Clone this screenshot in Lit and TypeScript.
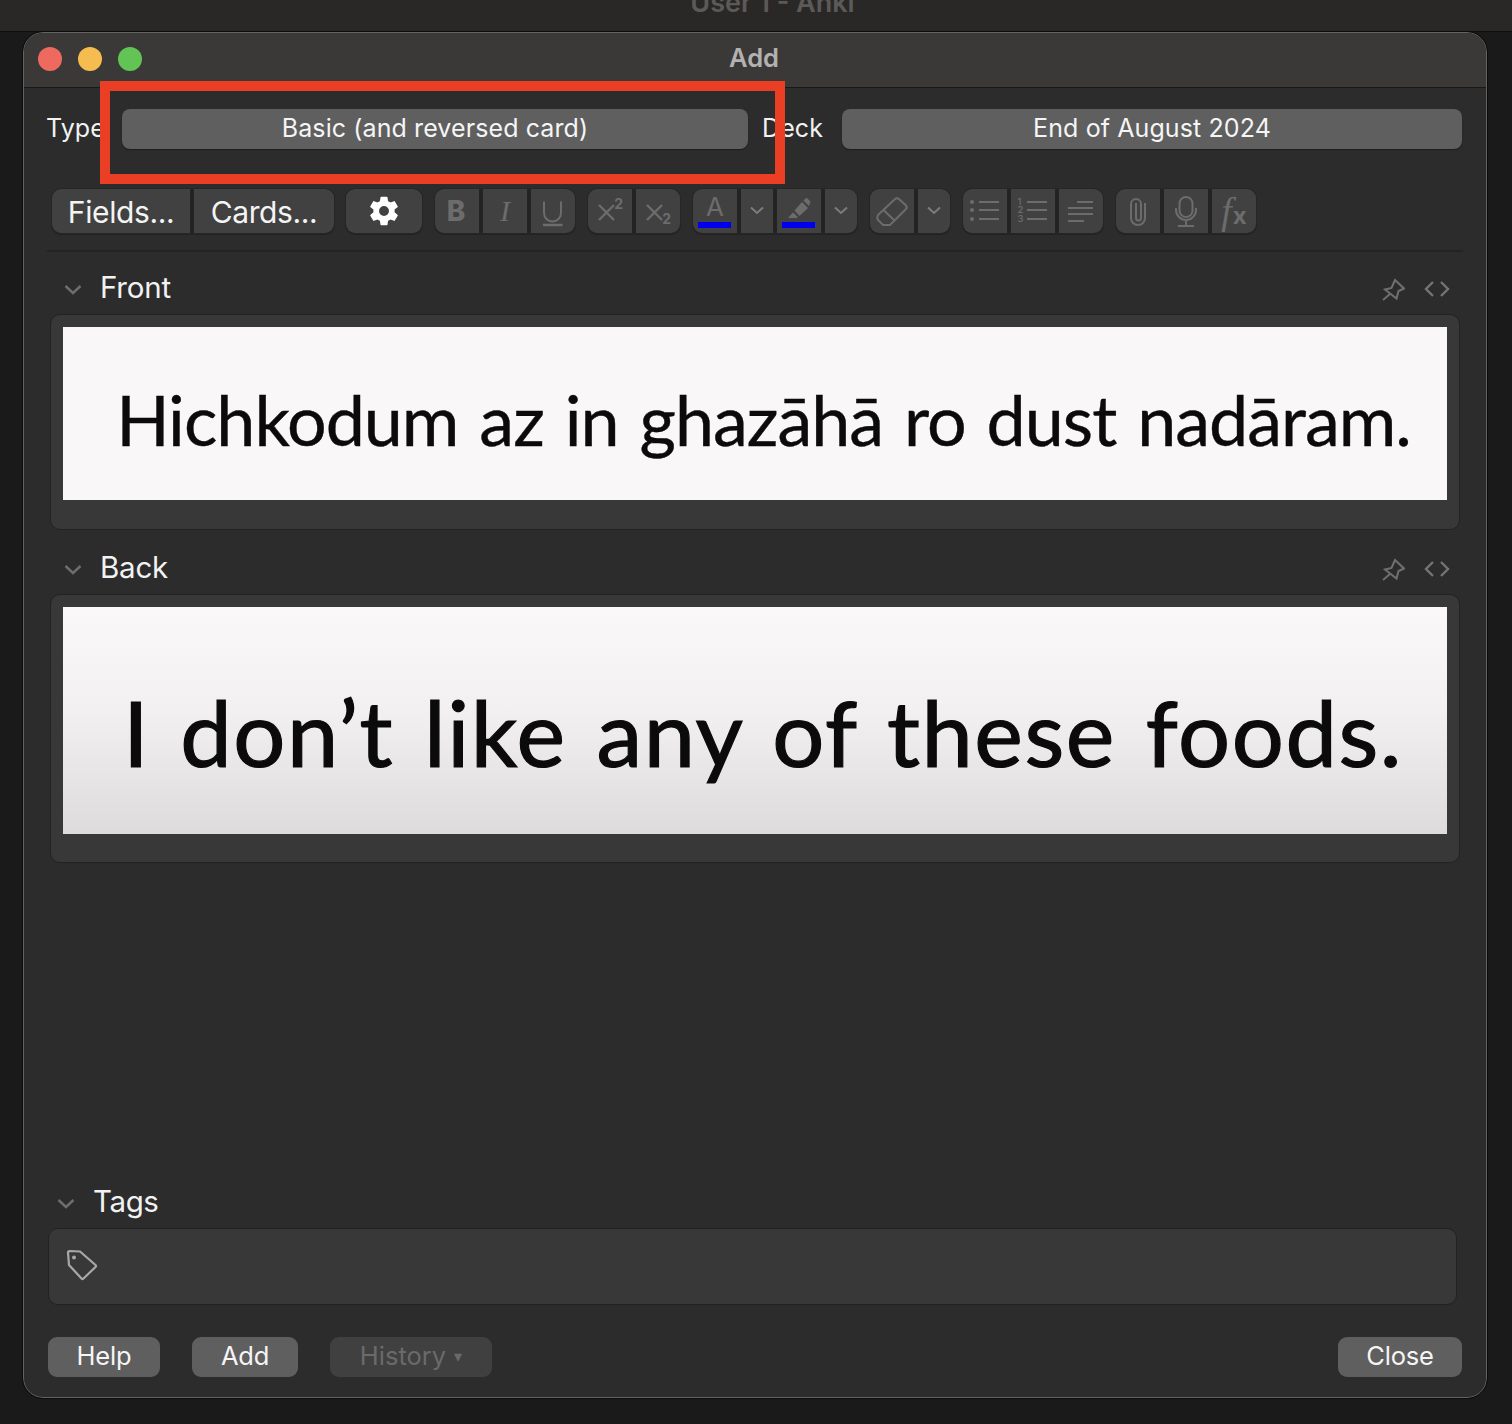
import { LitElement, html, css, svg } from "lit";
import { customElement } from "lit/decorators.js";

const chev = svg`<path d="M3 5.5 L9 11 L15 5.5" fill="none" stroke="currentColor" stroke-width="2"/>`;
const bigChev = svg`<path d="M1.5 5 L9 12 L16.5 5" fill="none" stroke="currentColor" stroke-width="2.4"/>`;
const icons: Record<string, any> = {
  gear: svg`<path fill="#fff" d="M12,15.5A3.5,3.5 0 0,1 8.5,12A3.5,3.5 0 0,1 12,8.5A3.5,3.5 0 0,1 15.5,12A3.5,3.5 0 0,1 12,15.5M19.43,12.97C19.47,12.65 19.5,12.33 19.5,12C19.5,11.67 19.47,11.34 19.43,11L21.54,9.37C21.73,9.22 21.78,8.95 21.66,8.73L19.66,5.27C19.54,5.05 19.27,4.96 19.05,5.05L16.56,6.05C16.04,5.66 15.5,5.32 14.87,5.07L14.5,2.42C14.46,2.18 14.25,2 14,2H10C9.75,2 9.54,2.18 9.5,2.42L9.13,5.07C8.5,5.32 7.96,5.66 7.44,6.05L4.95,5.05C4.73,4.96 4.46,5.05 4.34,5.27L2.34,8.73C2.21,8.95 2.27,9.22 2.46,9.37L4.57,11C4.53,11.34 4.5,11.67 4.5,12C4.5,12.33 4.53,12.65 4.57,12.97L2.46,14.63C2.27,14.78 2.21,15.05 2.34,15.27L4.34,18.73C4.46,18.95 4.73,19.03 4.95,18.95L7.44,17.94C7.96,18.34 8.5,18.68 9.13,18.93L9.5,21.58C9.54,21.82 9.75,22 10,22H14C14.25,22 14.46,21.82 14.5,21.58L14.87,18.93C15.5,18.67 16.04,18.34 16.56,17.94L19.05,18.95C19.27,19.03 19.54,18.95 19.66,18.73L21.66,15.27C21.78,15.05 21.73,14.78 21.54,14.63L19.43,12.97Z"/>`,
  under: svg`<path d="M13 12.5 V24 a8.5 8.5 0 0 0 17 0 V12.5" fill="none" stroke="#6c6c6c" stroke-width="2"/><path d="M12 36 H31.5" stroke="#6c6c6c" stroke-width="2.4"/>`,
  sup: svg`<path d="M11 16 L26 31 M26 16 L11 31" stroke="#6c6c6c" stroke-width="2.4"/>`,
  sub: svg`<path d="M11 16 L26 31 M26 16 L11 31" stroke="#6c6c6c" stroke-width="2.4"/>`,
  pen: svg`<path fill="#6c6c6c" d="M11 29 L16 23.5 L21 28 L19 29 Z M17.5 21.5 L25 13 L31 19 L22.5 27 Z M26.5 11.5 L28.5 9.5 Q29.5 8.5 30.5 9.5 L33 12 Q34 13 33 14 L32 17 Z"/>`,
  eraser: svg`<g fill="none" stroke="#6c6c6c" stroke-width="2"><path d="M8 26 L25 10 Q27 8.5 29 10 L36 16.5 Q37.5 18.5 36 20 L20 36 H13 L8 31 Q6.5 28.5 8 26 Z"/><path d="M13.5 21 L25 32"/></g>`,
  ul: svg`<g fill="#6c6c6c"><circle cx="9" cy="13" r="2"/><circle cx="9" cy="21" r="2"/><circle cx="9" cy="30" r="2"/></g><path d="M16 13 H36 M16 21 H36 M16 30 H36" stroke="#6c6c6c" stroke-width="2"/>`,
  ol: svg`<path d="M16 13 H36 M16 21 H36 M16 30 H36" stroke="#6c6c6c" stroke-width="2"/>`,
  just: svg`<path d="M18 13 H34 M9 19 H34 M9 25 H34 M9 32 H25" stroke="#6c6c6c" stroke-width="2"/>`,
  clip: svg`<path d="M20 14 V29 a2.5 2.5 0 0 0 5 0 V15 a5 5 0 0 0 -10 0 V29 a7 7 0 0 0 14 0 V14" fill="none" stroke="#6c6c6c" stroke-width="2"/>`,
  mic: svg`<g fill="none" stroke="#6c6c6c" stroke-width="2"><rect x="15.5" y="8" width="13" height="20" rx="6.5"/><path d="M12 19 V21 a10 10 0 0 0 20 0 V19 M22 31 V37 M14 37 H30"/></g>`,
  pin: svg`<g fill="none" stroke="#707070" stroke-width="2"><path d="M14 2 L23 10.5 L17.5 13 L15.5 20.5 L4 11.5 L10.5 10 Z"/><path d="M9 16 L2 22"/></g>`,
  code: svg`<path d="M9 3 L2 10 L9 17 M17 3 L24 10 L17 17" fill="none" stroke="#747474" stroke-width="2.4"/>`,
  tag: svg`<g fill="none" stroke="#a8a8a8" stroke-width="2.2"><path d="M2 3.5 Q2 2 3.5 2 L14 2.5 L29.5 16 Q30.5 17 29.5 18 L17.5 29.5 Q16.5 30.5 15.5 29.5 L3 16 Z"/></g><circle cx="8" cy="8.5" r="2" fill="#a8a8a8"/>`,
};

@customElement("app-root")
export class AppRoot extends LitElement {
  static styles = css`
    :host { display: block; width: 1512px; height: 1424px; position: relative; overflow: hidden;
      background: #1a1a1a; font-family: Inter, "Noto Sans", sans-serif; color: #f2f2f2; }
    .desk { height: 31px; background: #2a2827; border-bottom: 1px solid #0e0e0e; text-align: center; overflow: hidden;
      color: #5c5a59; font-weight: 600; font-size: 27px; line-height: 6px; padding-left: 33px; }
    .window { width: 1464px; height: 1366px; margin-left: 23px; box-sizing: border-box; background: #2c2c2c;
      border: 1px solid #636363; border-radius: 20px; outline: 1px solid #0c0c0c; overflow: hidden;
      display: flex; flex-direction: column; }
    .title { height: 55px; flex: none; box-sizing: border-box; background: #3b3938; border-bottom: 1px solid #191919; display: flex; align-items: center;
      justify-content: center; position: relative; font-size: 25.5px; font-weight: 600; color: #b3b2b1; padding: 0 2px 5px 0; }
    .lights { position: absolute; left: 14px; top: 14px; display: flex; gap: 16px; }
    .lights i { width: 24px; height: 24px; border-radius: 50%; display: block; }
    .body { flex: 1; display: flex; flex-direction: column; padding: 21px 24px 20px 23px; min-height: 0; }
    .top { display: flex; align-items: center; height: 40px; font-size: 25px; letter-spacing: 0.1px; }
    .select { height: 40px; box-sizing: border-box; padding-bottom: 2px; background: #5f5f5f; border-radius: 8px; display: flex; align-items: center; justify-content: center;
      box-shadow: 0 1px 1px #1d1d1d; color: #f5f5f5; }
    .type-label { width: 76px; flex: none; margin-left: -1px; padding-bottom: 2px; }
    .s1 { width: 626px; flex: none; }
    .deck-label { width: 93px; flex: none; padding: 0 0 2px 14px; margin-right: 1px; box-sizing: border-box; }
    .s2 { width: 620px; flex: none; }
    .tools { display: flex; margin: 40px 0 0 5px; height: 45px; gap: 13px; }
    .group { display: flex; gap: 4px; background: #232323; border-radius: 9px; box-shadow: 0 0 0 1px #262626, 0 1px 0 1px #232323; height: 44px; }
    .gear-group { margin-left: -1px; }
    .btn { height: 44px; width: 44px; background: #414141; display: flex; align-items: center; justify-content: center; color: #6e6e6e; position: relative; }
    .btn:first-child { border-radius: 9px 0 0 9px; }
    .btn:last-child { border-radius: 0 9px 9px 0; }
    .btn.chev { width: 32px; color: #7c7c7c; }
    .btn svg { display: block; }
    .txt { font-size: 30px; color: #f4f4f4; letter-spacing: -0.4px; box-sizing: border-box; padding-top: 2px; }
    .wide { width: 138px; }
    .wide2 { width: 140px; }
    .gearb { width: 76px; border-radius: 9px !important; box-sizing: border-box; }
    .gl { font-size: 28px; color: #6c6c6c; font-family: Inter, sans-serif; font-weight: 800; line-height: 1; }
    .bold { margin-right: 2px; }
    .it { font-family: "Liberation Serif", serif; font-style: italic; font-weight: 400; font-size: 30px; }
    .sup2 { position: absolute; right: 9px; top: 8px; font-size: 14px; font-weight: 700; }
    .sub2 { position: absolute; right: 9px; bottom: 7px; font-size: 14px; font-weight: 700; }
    .a { font-weight: 400; font-size: 26px; margin-bottom: 8px; }
    .nums { position: absolute; left: 6.5px; top: 9px; font-size: 9.5px; font-weight: 500; line-height: 8.4px; white-space: pre-line; }
    .fxf { font-size: 38px; letter-spacing: 1px; }
    .fxx { font-size: 24px; font-weight: 700; margin-top: 9px; }
    .bar { position: absolute; left: 5px; right: 6px; bottom: 5px; height: 6px; background: #0000ee; }
    .sep { height: 2px; background: #232323; margin: 16px -1px 0 0; }
    .fh { display: flex; align-items: center; height: 36px; margin-left: 3px; font-size: 29.5px; letter-spacing: -0.2px; }
    .fh svg.c { color: #6e6e6e; margin: 5px 18px 0 14px; }
    .fh .lab { flex: 1; }
    .fh .pin { margin-right: 19px; margin-top: 6px; }
    .fh .code { margin-right: 12px; margin-top: 4px; }
    .first { margin-top: 17px; }
    .field { margin: 9px 2px 0 3px; background: #383838; border: 1px solid #222; border-radius: 10px; padding: 12px 12px 29px; }
    .f2 { padding-bottom: 28px; }
    .pic { background: #faf7f8; display: flex; align-items: center; justify-content: center; color: #0b0b0b; font-family: Lato, sans-serif; overflow: hidden; white-space: nowrap; box-sizing: border-box; }
    .p1 { height: 173px; font-size: 70px; word-spacing: 4px; letter-spacing: -1px; padding: 10px 0 0 17px; -webkit-text-stroke: 0.4px #0b0b0b; }
    .p2 { height: 227px; font-size: 92px; word-spacing: 5px; letter-spacing: 1.5px; padding: 22px 0 0 16px; background: linear-gradient(#fbf8f9, #f3f0f1 45%, #dedbdc); -webkit-text-stroke: 1.2px #0b0b0b; }
    .back { margin-top: 19px; }
    .grow { flex: 1; }
    .tags { margin-left: -4px; letter-spacing: -0.4px; }
    .tagbox { height: 77px; box-sizing: border-box; margin: 9px 5px 0 1px; background: #383838; border: 1px solid #222; border-radius: 10px; display: flex; align-items: center; padding: 0 0 4px 17px; }
    .foot { display: flex; gap: 32px; margin: 32px 0 0 1px; font-size: 25.5px; letter-spacing: -0.2px; }
    .b { height: 40px; box-sizing: border-box; padding-bottom: 3px; background: #5f5f5f; border-radius: 9px; display: flex; align-items: center; justify-content: center; color: #f5f5f5; }
    .off { background: #404040; color: #6a6a6a; letter-spacing: 0; }
    .off small { font-size: 16px; margin-left: 8px; line-height: 1; }
    .close { margin-left: auto; }
    .mark { position: absolute; left: 100px; top: 81px; width: 685px; height: 103px; box-sizing: border-box; border: 10px solid #ea3f24; pointer-events: none; }
  `;

  private ic(name: string, w = 44, h = 44) {
    return html`<svg width=${w} height=${h} viewBox="0 0 ${w} ${h}">${icons[name]}</svg>`;
  }
  private chevBtn() {
    return html`<div class="btn chev"><svg width="18" height="18" viewBox="0 0 18 18">${chev}</svg></div>`;
  }
  private fieldHead(label: string, cls: string) {
    return html`<div class="fh ${cls}">
      <svg class="c" width="18" height="18" viewBox="0 0 18 18">${bigChev}</svg>
      <span class="lab">${label}</span>
      <svg class="pin" width="24" height="24" viewBox="0 0 24 24">${icons.pin}</svg>
      <svg class="code" width="26" height="20" viewBox="0 0 26 20">${icons.code}</svg>
    </div>`;
  }

  render() {
    return html`
      <div class="desk">User 1 - Anki</div>
      <div class="window">
        <div class="title">
          <div class="lights"><i style="background:#ee6a5f"></i><i style="background:#f5bd4f"></i><i style="background:#61c454"></i></div>
          Add
        </div>
        <div class="body">
          <div class="top">
            <span class="type-label">Type</span>
            <div class="select s1">Basic (and reversed card)</div>
            <span class="deck-label">Deck</span>
            <div class="select s2">End of August 2024</div>
          </div>
          <div class="tools">
            <div class="group">
              <div class="btn wide txt">Fields...</div>
              <div class="btn wide2 txt">Cards...</div>
            </div>
            <div class="group gear-group"><div class="btn gearb"><svg width="34" height="34" viewBox="0 0 24 24">${icons.gear}</svg></div></div>
            <div class="group">
              <div class="btn"><span class="gl bold">B</span></div>
              <div class="btn"><span class="gl it">I</span></div>
              <div class="btn">${this.ic("under")}</div>
            </div>
            <div class="group">
              <div class="btn">${this.ic("sup")}<span class="gl sup2">2</span></div>
              <div class="btn">${this.ic("sub")}<span class="gl sub2">2</span></div>
            </div>
            <div class="group">
              <div class="btn"><span class="gl a">A</span><div class="bar"></div></div>
              ${this.chevBtn()}
              <div class="btn">${this.ic("pen")}<div class="bar"></div></div>
              ${this.chevBtn()}
            </div>
            <div class="group">
              <div class="btn">${this.ic("eraser")}</div>
              ${this.chevBtn()}
            </div>
            <div class="group">
              <div class="btn">${this.ic("ul")}</div>
              <div class="btn"><span class="gl nums">1
2
3</span>${this.ic("ol")}</div>
              <div class="btn">${this.ic("just")}</div>
            </div>
            <div class="group">
              <div class="btn">${this.ic("clip")}</div>
              <div class="btn">${this.ic("mic")}</div>
              <div class="btn"><span class="gl it fxf">f</span><span class="gl fxx">x</span></div>
            </div>
          </div>
          <div class="sep"></div>
          ${this.fieldHead("Front", "first")}
          <div class="field"><div class="pic p1">Hichkodum az in ghazāhā ro dust nadāram.</div></div>
          ${this.fieldHead("Back", "back")}
          <div class="field f2"><div class="pic p2">I don’t like any of these foods.</div></div>
          <div class="grow"></div>
          <div class="fh tags">
            <svg class="c" width="18" height="18" viewBox="0 0 18 18">${bigChev}</svg>
            <span class="lab">Tags</span>
          </div>
          <div class="tagbox"><svg width="32" height="32" viewBox="0 0 32 32">${icons.tag}</svg></div>
          <div class="foot">
            <div class="b" style="width:112px">Help</div>
            <div class="b" style="width:106px">Add</div>
            <div class="b off" style="width:162px">History<small>▾</small></div>
            <div class="b close" style="width:124px">Close</div>
          </div>
        </div>
      </div>
      <div class="mark"></div>
    `;
  }
}
